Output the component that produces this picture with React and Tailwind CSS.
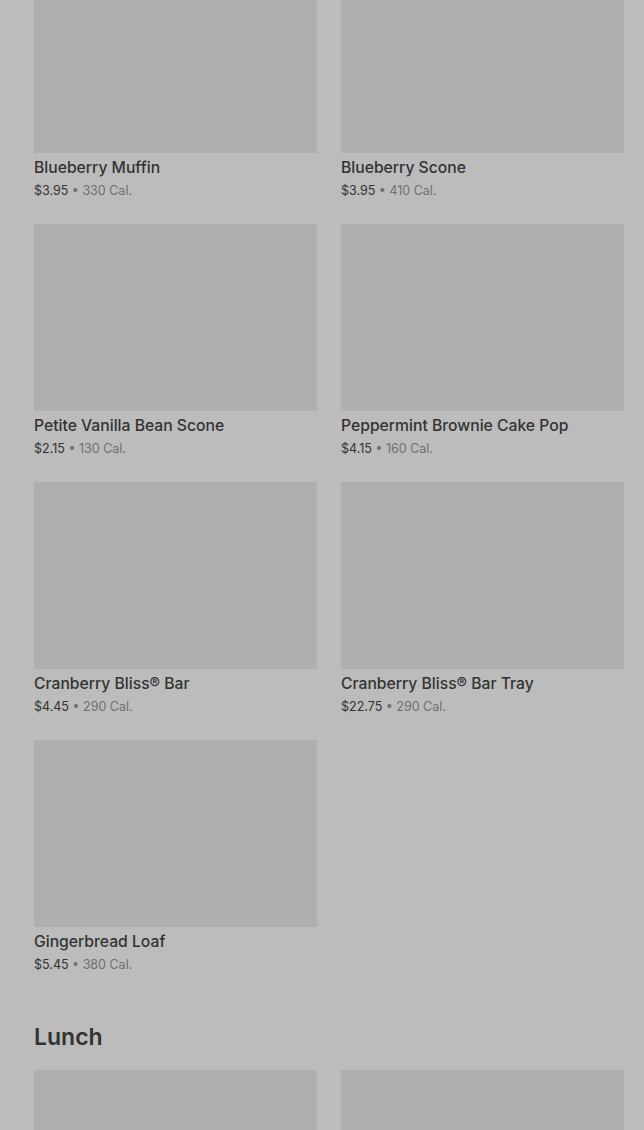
const ITEMS = [
  { name: "Blueberry Muffin", price: "$3.95", cal: "330 Cal." },
  { name: "Blueberry Scone", price: "$3.95", cal: "410 Cal." },
  { name: "Petite Vanilla Bean Scone", price: "$2.15", cal: "130 Cal." },
  { name: "Peppermint Brownie Cake Pop", price: "$4.15", cal: "160 Cal." },
  { name: "Cranberry Bliss® Bar", price: "$4.45", cal: "290 Cal." },
  { name: "Cranberry Bliss® Bar Tray", price: "$22.75", cal: "290 Cal." },
  { name: "Gingerbread Loaf", price: "$5.45", cal: "380 Cal." },
];

function Card({ item }) {
  return (
    <div>
      <div className="h-[187px] bg-[#afafaf]" />
      <div className="mt-[3px] text-[15.7px] leading-[24px] font-medium text-[#333333]">{item.name}</div>
      <div className="mt-[1px] text-[12.5px] leading-[19px] text-[#707070]">
        <span className="text-[#333333]">{item.price}</span> • {item.cal}
      </div>
    </div>
  );
}

export default function App() {
  return (
    <div className="h-[1130px] overflow-hidden bg-[#bcbcbc] pl-[34px] pr-[20px] font-['Inter',sans-serif]">
      <div className="-mt-[34px] grid grid-cols-2 gap-x-6 gap-y-6">
        {ITEMS.map((item) => (
          <Card key={item.name} item={item} />
        ))}
      </div>

      {/* Lunch section */}
      <h2 className="mt-[47px] mb-[17px] text-[23px] leading-[32px] font-semibold text-[#333333]">Lunch</h2>
      <div className="grid grid-cols-2 gap-x-6 gap-y-6">
        <div className="h-[187px] bg-[#afafaf]" />
        <div className="h-[187px] bg-[#afafaf]" />
      </div>
    </div>
  );
}
